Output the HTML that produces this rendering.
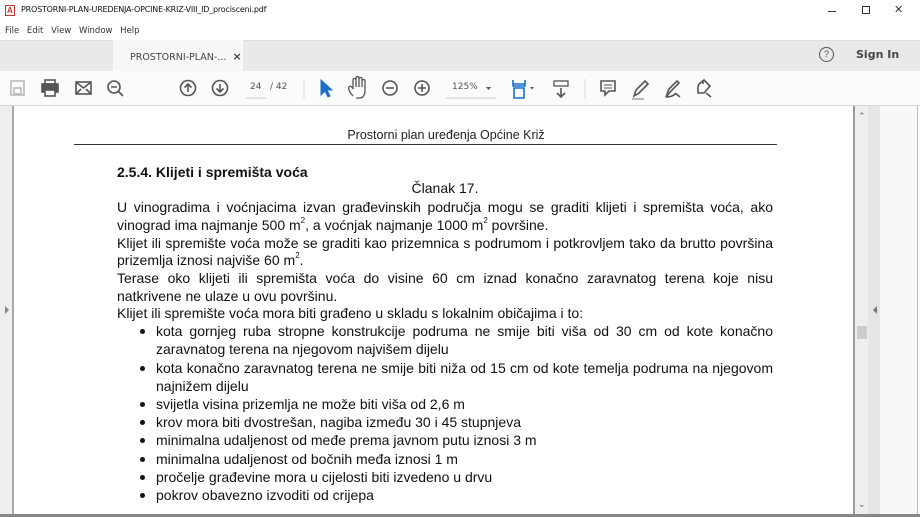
<!DOCTYPE html>
<html><head><meta charset="utf-8"><style>
*{margin:0;padding:0;box-sizing:border-box}
body{width:920px;height:517px;overflow:hidden;background:#fff;font-family:"Liberation Sans",Arial,sans-serif;position:relative}
.a{position:absolute}
.ui{font-family:"DejaVu Sans","Liberation Sans",sans-serif}
.l{position:absolute;left:117px;width:656px;font-size:14px;line-height:16px;color:#111;white-space:nowrap}
.j{text-align:justify;text-align-last:justify}
.b{left:156px;width:617px}
.b::before{content:"";position:absolute;left:-16px;top:6px;width:5px;height:5px;border-radius:50%;background:#111}
sup{font-size:8px;vertical-align:top;line-height:8px}
svg{position:absolute}
</style></head><body>
<div class="a" style="left:0;top:0;width:920px;height:20px;background:#fff"></div>
<div class="a" style="left:5px;top:5px;width:10px;height:11px;border:1px solid #c8302a;background:#fff"></div>
<div class="a" style="left:7px;top:6px;font-size:8px;color:#c8302a;font-weight:bold">A</div>
<div class="a ui" style="left:21px;top:5px;font-size:8px;color:#111;letter-spacing:-0.2px">PROSTORNI-PLAN-UREDENJA-OPCINE-KRIZ-VIII_ID_procisceni.pdf</div>
<div class="a" style="left:828px;top:11px;width:8px;height:1px;background:#333"></div>
<div class="a" style="left:862px;top:6px;width:8px;height:8px;border:1px solid #333"></div>
<div class="a ui" style="left:894px;top:3px;font-size:11px;color:#333">✕</div>
<div class="a ui" style="left:5px;top:26px;font-size:8.5px;color:#333;word-spacing:5px">File Edit View Window Help</div>
<div class="a" style="left:0;top:40px;width:920px;height:31px;background:#e9e9e9;border-top:1px solid #ddd"></div>
<div class="a" style="left:113px;top:40px;width:130px;height:31px;background:#f7f7f7"></div>
<div class="a ui" style="left:130px;top:50px;font-size:9.5px;color:#444">PROSTORNI-PLAN-...&nbsp;&nbsp;<b style="font-size:11px">×</b></div>
<div class="a" style="left:819px;top:47px;width:15px;height:15px;border:1.3px solid #555;border-radius:50%;font-size:9px;text-align:center;line-height:13px;color:#555">?</div>
<div class="a ui" style="left:856px;top:48px;font-size:11px;color:#444;font-weight:bold">Sign In</div>
<div class="a" style="left:0;top:71px;width:920px;height:35px;background:#fbfbfb;border-bottom:1px solid #d8d8d8"></div>
<svg style="left:0;top:71px" width="920" height="35" fill="none" stroke="#555" stroke-width="1.6">
<rect x="11" y="10" width="13" height="14" stroke="#bbb"/><rect x="14" y="17" width="7" height="6" stroke="#bbb"/>
<rect x="42" y="13" width="16" height="8" fill="#555"/><rect x="45" y="9" width="10" height="4"/><rect x="45" y="19" width="10" height="6" fill="#fff"/>
<rect x="76" y="11" width="15" height="12"/><path d="M76 11l7.5 6 7.5-6M76 23l5-5M91 23l-5-5"/>
<circle cx="114" cy="16" r="6"/><path d="M118 20l5 5M111 16h6"/>
<circle cx="188" cy="17" r="7.5"/><path d="M188 21v-8M184.5 16.5l3.5-3.5 3.5 3.5"/>
<circle cx="220" cy="17" r="7.5"/><path d="M220 13v8M216.5 17.5l3.5 3.5 3.5-3.5"/>
<path d="M246 27h20" stroke="#ccc" stroke-width="1"/>
<path d="M304 8v20" stroke="#ddd" stroke-width="1"/>
<path d="M321 9v15l4-4 3 6 2-1-3-6h5z" fill="#1a6fc9" stroke="#1a6fc9" stroke-width="1"/>
<path d="M353 25c-3-3-5-7-4-9s3 0 4 2V9c0-2 3-2 3 0v7-9c0-2 3-2 3 0v9-8c0-2 3-2 3 0v8-6c0-2 3-2 3 0v9c0 5-2 8-5 8h-4" stroke-width="1.3"/>
<circle cx="390" cy="17" r="7"/><path d="M386 17h8"/>
<circle cx="422" cy="17" r="7"/><path d="M418 17h8M422 13v8"/>
<path d="M446 27h50" stroke="#ccc" stroke-width="1"/><path d="M486 16l2.5 3 2.5-3z" fill="#555" stroke="none"/>
<path d="M513 9v6h12v-6M513 13h12M514 17h10v10h-10z" stroke="#1a6fc9"/><path d="M530 16l2 2.5 2-2.5z" fill="#555" stroke="none"/>
<rect x="554" y="10" width="14" height="5" stroke-width="1.3"/><path d="M561 17v9M557 22l4 4 4-4"/>
<path d="M585 8v20" stroke="#ddd" stroke-width="1"/>
<path d="M601 10h14v10h-6l-4 4v-4h-4z"/><path d="M604 14h8M604 17h8" stroke-width="1"/>
<path d="M634 25l2-6 9-9 3 3-9 9z"/><path d="M632 28h12" stroke="#aaa"/>
<path d="M666 26l3-8 8-8 2 2-8 8zM666 26c4 0 7-1 9-3M675 22l5 4" />
<path d="M699 13l5-4 6 6-6 7h-6v-6zM703 9v4M706 22l5 4"/>
</svg>
<div class="a ui" style="left:250px;top:82px;font-size:9px;color:#555">24&nbsp;&nbsp;&nbsp;/ 42</div>
<div class="a ui" style="left:452px;top:82px;font-size:9px;color:#555">125%</div>
<div class="a" style="left:0;top:106px;width:14px;height:408px;background:#eee;border-right:2px solid #aaa"></div>
<div class="a" style="left:5px;top:306px;width:0;height:0;border-top:4px solid transparent;border-bottom:4px solid transparent;border-left:4px solid #888"></div>
<div class="a" style="left:853px;top:106px;width:2px;height:408px;background:#999"></div>
<div class="a" style="left:855px;top:106px;width:13px;height:408px;background:#eee"></div>
<div class="a" style="left:857px;top:326px;width:10px;height:13px;background:#ccc"></div>
<div class="a ui" style="left:858px;top:112px;font-size:9px;color:#666">⌃</div>
<div class="a ui" style="left:858px;top:500px;font-size:9px;color:#666">⌄</div>
<div class="a" style="left:868px;top:106px;width:12px;height:408px;background:#e6e6e6"></div>
<div class="a" style="left:873px;top:306px;width:0;height:0;border-top:4px solid transparent;border-bottom:4px solid transparent;border-right:4px solid #777"></div>
<div class="a" style="left:880px;top:106px;width:38px;height:408px;background:#f8f8f8;border-right:1px solid #bbb"></div>
<div class="a" style="left:0;top:514px;width:920px;height:3px;background:#888"></div>
<div class="a" style="left:0;top:128px;width:892px;text-align:center;font-size:12.5px;color:#222">Prostorni plan uređenja Općine Križ</div>
<div class="a" style="left:74px;top:144px;width:703px;height:1px;background:#333"></div>
<div class="l" style="top:164px;font-weight:bold;font-size:14px">2.5.4. Klijeti i spremišta voća</div>
<div class="l" style="top:180px;text-align:center;left:117px;width:656px">Članak 17.</div>
<div class="l j" style="top:199px">U vinogradima i voćnjacima izvan građevinskih područja mogu se graditi klijeti i spremišta voća, ako</div>
<div class="l" style="top:217px">vinograd ima najmanje 500 m<sup>2</sup>, a voćnjak najmanje 1000 m<sup>2</sup> površine.</div>
<div class="l j" style="top:235px">Klijet ili spremište voća može se graditi kao prizemnica s podrumom i potkrovljem tako da brutto površina</div>
<div class="l" style="top:252px">prizemlja iznosi najviše 60 m<sup>2</sup>.</div>
<div class="l j" style="top:270px">Terase oko klijeti ili spremišta voća do visine 60 cm iznad konačno zaravnatog terena koje nisu</div>
<div class="l" style="top:288px">natkrivene ne ulaze u ovu površinu.</div>
<div class="l" style="top:305px">Klijet ili spremište voća mora biti građeno u skladu s lokalnim običajima i to:</div>
<div class="l j b" style="top:323px">kota gornjeg ruba stropne konstrukcije podruma ne smije biti viša od 30 cm od kote konačno</div>
<div class="l" style="top:341px;left:156px">zaravnatog terena na njegovom najvišem dijelu</div>
<div class="l j b" style="top:360px">kota konačno zaravnatog terena ne smije biti niža od 15 cm od kote temelja podruma na njegovom</div>
<div class="l" style="top:378px;left:156px">najnižem dijelu</div>
<div class="l b" style="top:396px">svijetla visina prizemlja ne može biti viša od 2,6 m</div>
<div class="l b" style="top:414px">krov mora biti dvostrešan, nagiba između 30 i 45 stupnjeva</div>
<div class="l b" style="top:432px">minimalna udaljenost od međe prema javnom putu iznosi 3 m</div>
<div class="l b" style="top:451px">minimalna udaljenost od bočnih međa iznosi 1 m</div>
<div class="l b" style="top:469px">pročelje građevine mora u cijelosti biti izvedeno u drvu</div>
<div class="l b" style="top:487px">pokrov obavezno izvoditi od crijepa</div>
</body></html>
